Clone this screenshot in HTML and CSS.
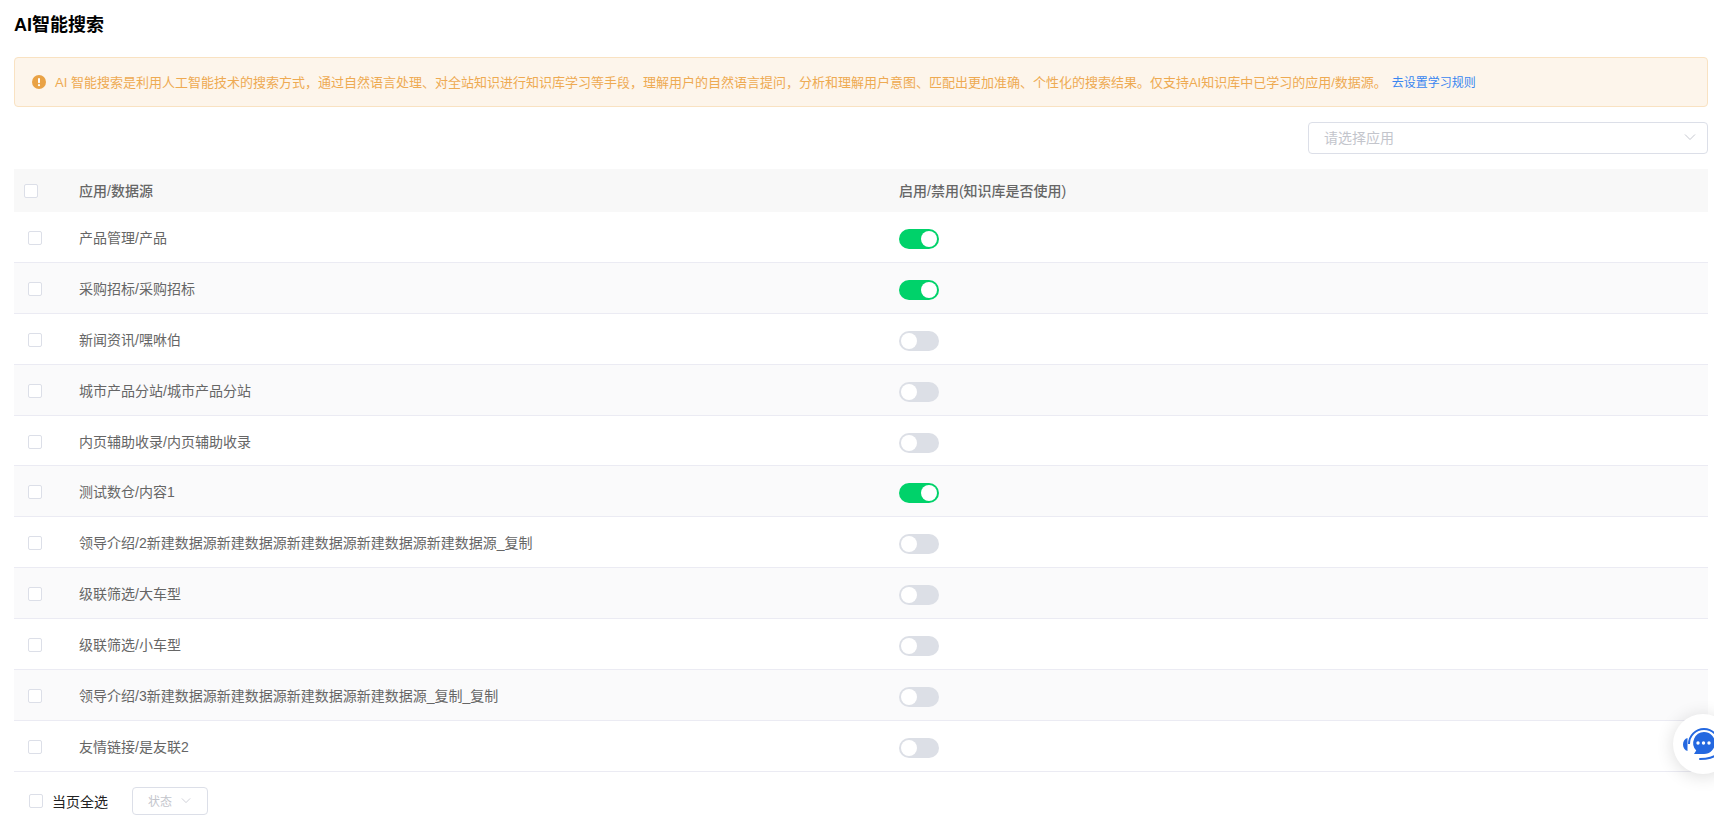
FILE: index.html
```html
<!DOCTYPE html>
<html lang="zh-CN">
<head>
<meta charset="utf-8">
<title>AI智能搜索</title>
<link rel="stylesheet" href="styles.css">
</head>
<body>
<main class="page">
  <h1 class="title">AI智能搜索</h1>
  <div class="alert">
    <svg class="alert-icon" viewBox="0 0 14 14" width="14" height="14"><circle cx="7" cy="7" r="7" fill="#e9a245"/><rect x="6" y="3" width="2" height="5.2" rx="1" fill="#fff"/><circle cx="7" cy="10.2" r="1.1" fill="#fff"/></svg>
    <span class="alert-text">AI 智能搜索是利用人工智能技术的搜索方式，通过自然语言处理、对全站知识进行知识库学习等手段，理解用户的自然语言提问，分析和理解用户意图、匹配出更加准确、个性化的搜索结果。仅支持AI知识库中已学习的应用/数据源。</span>
    <a class="alert-link" href="#">去设置学习规则</a>
  </div>
  <div class="toolbar">
    <div class="select app-select">
      <span class="select-text">请选择应用</span>
      <svg class="chev" viewBox="0 0 12 8" width="12" height="8"><path d="M1 1.5 6 6.500 11 1.500" fill="none" stroke="#c6c8d0" stroke-width="1"/></svg>
    </div>
  </div>
  <div class="table">
    <div class="row head"><span class="check head-check"></span><span class="name">应用/数据源</span><span class="state">启用/禁用(知识库是否使用)</span></div>
    <div class="row"><span class="check"></span><span class="name">产品管理/产品</span><span class="state"><i class="switch on"></i></span></div>
    <div class="row alt"><span class="check"></span><span class="name">采购招标/采购招标</span><span class="state"><i class="switch on"></i></span></div>
    <div class="row"><span class="check"></span><span class="name">新闻资讯/嘿咻伯</span><span class="state"><i class="switch"></i></span></div>
    <div class="row alt"><span class="check"></span><span class="name">城市产品分站/城市产品分站</span><span class="state"><i class="switch"></i></span></div>
    <div class="row"><span class="check"></span><span class="name">内页辅助收录/内页辅助收录</span><span class="state"><i class="switch"></i></span></div>
    <div class="row alt"><span class="check"></span><span class="name">测试数仓/内容1</span><span class="state"><i class="switch on"></i></span></div>
    <div class="row"><span class="check"></span><span class="name">领导介绍/2新建数据源新建数据源新建数据源新建数据源新建数据源_复制</span><span class="state"><i class="switch"></i></span></div>
    <div class="row alt"><span class="check"></span><span class="name">级联筛选/大车型</span><span class="state"><i class="switch"></i></span></div>
    <div class="row"><span class="check"></span><span class="name">级联筛选/小车型</span><span class="state"><i class="switch"></i></span></div>
    <div class="row alt"><span class="check"></span><span class="name">领导介绍/3新建数据源新建数据源新建数据源新建数据源_复制_复制</span><span class="state"><i class="switch"></i></span></div>
    <div class="row"><span class="check"></span><span class="name">友情链接/是友联2</span><span class="state"><i class="switch"></i></span></div>
  </div>
  <div class="footer">
    <span class="check"></span>
    <span class="all">当页全选</span>
    <div class="select state-select">
      <span>状态</span>
      <svg class="chev" viewBox="0 0 12 8" width="10" height="7"><path d="M1 1.5 6 6.500 11 1.500" fill="none" stroke="#c6c8d0" stroke-width="1"/></svg>
    </div>
  </div>
</main>
<button class="chat" aria-label="客服">
  <svg viewBox="0 0 44 44" width="44" height="44">
    <path d="M6 17a15 15 0 0 1 30 0" fill="none" stroke="#2468e0" stroke-width="2"/>
    <path d="M4.500 11v13C1.800 23.300 0 20.800 0 17.500S1.800 11.700 4.500 11z" fill="#2468e0"/>
    <path d="M21 5a11 11 0 0 1 0 22H11l2.200-3.500A11 11 0 0 1 21 5z" fill="#2468e0"/>
    <circle cx="15" cy="16" r="1.700" fill="#fff"/><circle cx="20.500" cy="16" r="1.700" fill="#fff"/><circle cx="26" cy="16" r="1.700" fill="#fff"/>
    <path d="M17 32c6 0 13-1 18-5" fill="none" stroke="#2468e0" stroke-width="2" stroke-linecap="round"/>
  </svg>
</button>
</body>
</html>
```
FILE: styles.css
```css
* { box-sizing: border-box; }
html, body { margin: 0; height: 100%; overflow: hidden; background: #fff; }
body { font-family: "Liberation Sans", "Noto Sans CJK SC", sans-serif; color: #666; font-size: 14px; }
.page { padding: 14px 6px 0 14px; }
.title { margin: 0; height: 22px; line-height: 22px; font-size: 18px; font-weight: 700; color: #000; }
.alert { display: flex; align-items: center; height: 50px; margin-top: 21px; padding: 0 17px; background: #fdf5eb; border: 1px solid #f9e2c2; border-radius: 4px; font-size: 13px; color: #eeaa52; }
.alert-icon { flex: none; margin-right: 9px; }
.alert-text { white-space: nowrap; margin-bottom: 2px; }
.alert-link { color: #3a86f0; font-size: 12px; text-decoration: none; margin-left: 5px; margin-bottom: 2px; white-space: nowrap; }
.toolbar { display: flex; justify-content: flex-end; margin-top: 15px; }
.select { display: flex; align-items: center; justify-content: space-between; background: #fff; border: 1px solid #dcdfe8; border-radius: 4px; color: #c3c5cc; }
.app-select { width: 400px; height: 32px; padding: 0 11px 0 15px; font-size: 14px; }
.select-text, .app-select .chev { margin-bottom: 2px; }
.table { margin-top: 15px; }
.row { display: flex; align-items: center; height: 50.9px; border-bottom: 1px solid #ebebf3; }
.row.alt { background: #fafafb; }
.row.head { height: 43px; padding: 0 0 2px; background: #f8f8f8; border-bottom: 0; font-weight: 500; }
.check { display: block; flex: none; width: 14px; height: 14px; background: #fff; border: 1px solid #dcdfe8; border-radius: 2px; margin: 2px 0 0 14px; }
.head-check { margin: 2px 0 0 10px; }
.name { margin-left: 37px; width: 820px; flex: none; white-space: nowrap; }
.head .name { margin-left: 41px; }
.state { display: flex; align-items: center; }
.switch { display: block; position: relative; width: 40px; height: 20px; margin-top: 4px; border-radius: 10px; background: #dcdfe6; }
.switch::after { content: ""; position: absolute; left: 2px; top: 2px; width: 16px; height: 16px; border-radius: 50%; background: #fff; }
.switch.on { background: #00d26a; }
.switch.on::after { left: 22px; }
.footer { display: flex; align-items: center; height: 28px; margin-top: 15px; }
.footer .check { margin: 0 0 0 15px; }
.all { margin-left: 9px; color: #222; }
.state-select { width: 76px; height: 28px; margin-left: 24px; padding: 0 16px 0 15px; font-size: 12px; }
.chat { position: absolute; right: -19px; top: 714px; width: 60px; height: 60px; padding: 0; border: 0; border-radius: 50%; background: #fff; box-shadow: 0 2px 18px rgba(0,0,0,.14); display: flex; align-items: flex-start; justify-content: flex-start; }
.chat svg { margin: 13px 0 0 10px; }
```
